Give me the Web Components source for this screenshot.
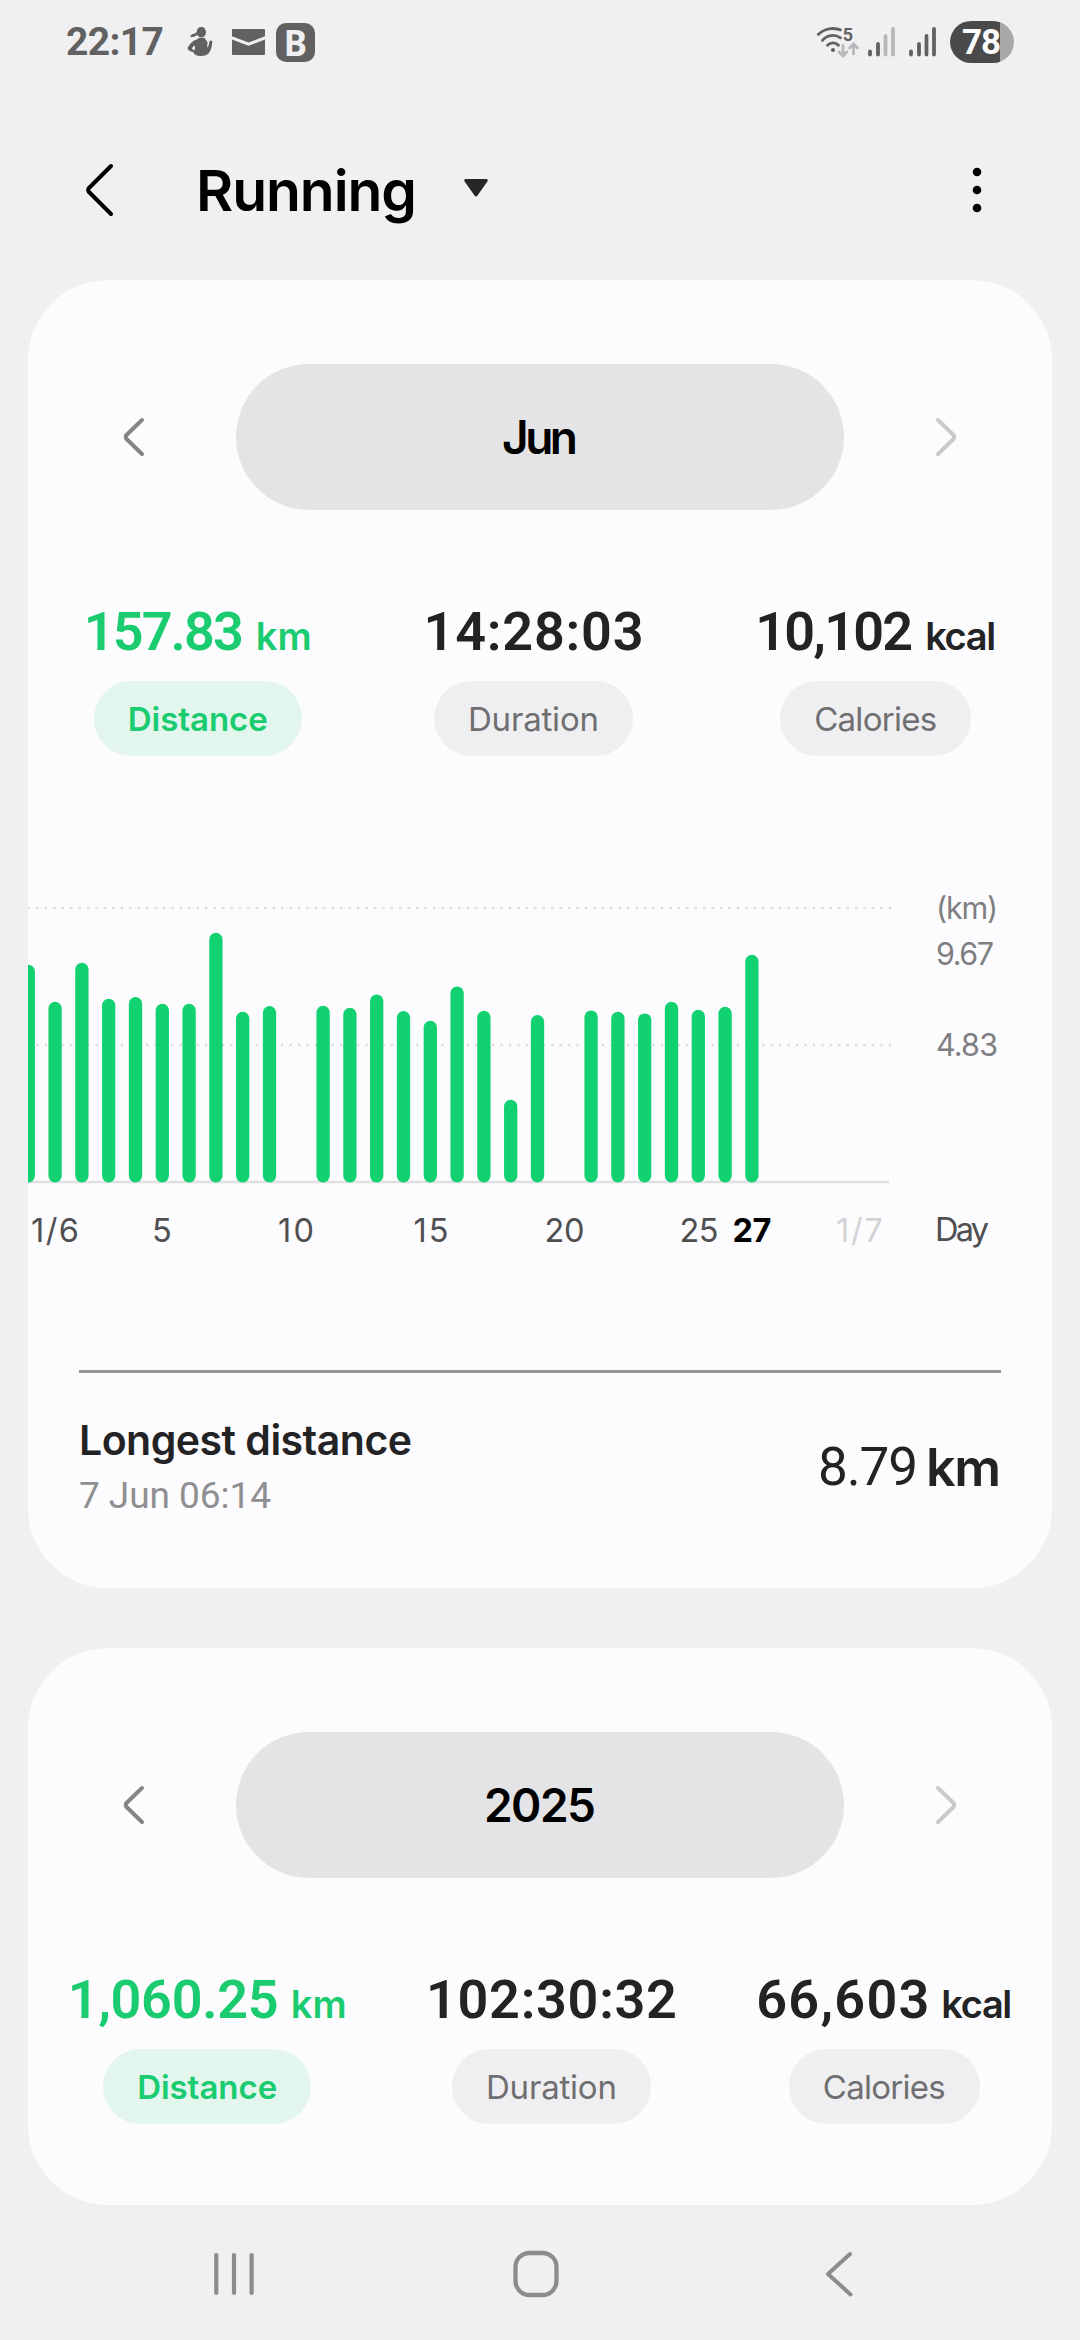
<!DOCTYPE html>
<html lang="en">
<head>
<meta charset="UTF-8">
<meta name="viewport" content="width=device-width, initial-scale=1.0">
<title>Running</title>
<style>
    body {
        margin: 0;
        width: 1080px;
        height: 2340px;
        overflow: hidden;
        background: #f0f0f2;
        color: #232325;
        font-family: Roboto, "Noto Sans", sans-serif;
        --words: Inter, Roboto, sans-serif;
        --green: #1acb70;
        --bar: #11d170;
        --card: #fcfcfe;
    }
</style>
</head>
<body>
    <running-app></running-app>

<script>
// Inline text that is tracked to a given width
class FitText extends HTMLElement {
    constructor() {
        super();
        this.attachShadow({ mode: 'open' });
        this.shadowRoot.innerHTML = `
            <style>
                :host { display: inline-block; white-space: nowrap; }
                span { display: inline-block; }
            </style>
            <span><slot></slot></span>
        `;
    }

    connectedCallback() {
        const target = parseFloat(this.getAttribute('w'));
        const span = this.shadowRoot.querySelector('span');
        const count = this.textContent.length;
        if (!target || count < 2) return;
        const gap = (target - span.getBoundingClientRect().width) / (count - 1);
        span.style.letterSpacing = `${gap}px`;
        span.style.marginRight = `${-gap}px`;
    }
}

class StatusBar extends HTMLElement {
    constructor() {
        super();
        this.attachShadow({ mode: 'open' });
        this.shadowRoot.innerHTML = `
            <style>
                :host {
                    box-sizing: border-box;
                    display: flex;
                    align-items: center;
                    height: 84px;
                    padding: 0 66px;
                    color: #616161;
                }
                svg { display: block; flex: none; }
                .time { font-size: 39px; font-weight: 700; margin-right: 23px; }
                .woman { margin-right: 18px; }
                .mail { margin-right: 11px; }
                .app {
                    width: 39px;
                    height: 39px;
                    border-radius: 10px;
                    background: #616161;
                    color: #f0f0f2;
                    font: 700 35px/39px "Noto Sans", sans-serif;
                    text-align: center;
                }
                .spacer { flex: 1; }
                .wifi { margin-right: 9px; }
                .signal { margin-right: 14px; }
                .battery {
                    box-sizing: border-box;
                    width: 64px;
                    height: 42px;
                    border-radius: 21px;
                    background: linear-gradient(90deg, #4a4a4a 50px, #a8a8aa 50px);
                    color: #fcfcfc;
                    font-size: 35px;
                    font-weight: 700;
                    line-height: 43px;
                    padding-left: 12px;
                }
            </style>
            <fit-text class="time" w="98">22:17</fit-text>
            <svg class="woman" width="27" height="30" viewBox="0 0 27 30" fill="#616161">
                <ellipse cx="14.3" cy="5.2" rx="4.7" ry="5.4"/>
                <path d="M11 4.500c-2 1-3 2.300-5 2.500-1.500.3-2.500 1.300-2.700 3 3 .4 5.500-.5 7.700-3z"/>
                <path fill-rule="evenodd" d="M11.500 11h6.500c.2 2 2 2.500 2.500 4.500.3 1.700-.6 3-.3 5 2-1.500 1.600-4 2.300-6.200.6-1.300 2.800-1 2.800.5-.3 4-.8 7.500-3 10.500-1.300 2.500-4 3.700-8.300 3.700-4 0-7-1.300-7.700-4C3 24.500.5 22.500.5 21.200c2.500-4.700 4.500-6.700 8-8.200 1.500-.5 2.500-1 3-2zM7.300 18.500c-1.300 1-2.300 2.300-2.300 3.200.7.8 1.500 1.200 2.500 1.500.7-1.700.8-3.200-.2-4.700z"/>
            </svg>
            <svg class="mail" width="33" height="28" viewBox="0 0 33 28" fill="#616161">
                <path d="M1 1h31a1 1 0 0 1 1 1v6.300L16.500 14.500 0 8.300V2a1 1 0 0 1 1-1z"/>
                <path d="M0 11.500l16.500 6.300L33 11.500V26a1 1 0 0 1-1 1H1a1 1 0 0 1-1-1z"/>
            </svg>
            <div class="app">B</div>
            <div class="spacer"></div>
            <svg class="wifi" width="43" height="32" viewBox="0 0 43 32" fill="none" stroke="#616161" stroke-width="2.800" stroke-linecap="round">
                <path d="M1.500 9.300C8 2 18 1 25.500 4.300" stroke-linecap="butt"/>
                <path d="M6.500 14.300C11 8.800 19 8 24.500 11.800"/>
                <path d="M11.500 19.300c3-3.300 8-3.300 11 0"/>
                <circle cx="17" cy="24" r="2.100" fill="#616161" stroke="none"/>
                <path d="M27 19.500v10M23.200 26l3.800 4 3.800-4M37.500 28V19M33.500 22l4-4 4 4" stroke="#b8b8ba"/>
                <text x="26.800" y="14.500" font-size="18" font-weight="700" fill="#616161" stroke="none">5</text>
            </svg>
            <svg class="signal" width="27" height="30" viewBox="0 0 27 30" stroke="#616161" stroke-width="3.800" stroke-linecap="round">
                <path d="M2 24.500v3M10 17v10.500"/>
                <path d="M17.500 9v18.500M25 2v25.500" stroke="#b8b8ba"/>
            </svg>
            <svg class="signal" width="27" height="30" viewBox="0 0 27 30" stroke="#616161" stroke-width="3.800" stroke-linecap="round">
                <path d="M2 24.500v3M10 17v10.500M17.500 9v18.500M25 2v25.500"/>
            </svg>
            <div class="battery"><fit-text w="39">78</fit-text></div>
        `;
    }
}

class TitleBar extends HTMLElement {
    connectedCallback() {
        this.attachShadow({ mode: 'open' });
        this.shadowRoot.innerHTML = `
            <style>
                :host {
                    box-sizing: border-box;
                    display: flex;
                    align-items: center;
                    height: 196px;
                    padding: 16px 97px 0 84px;
                }
                svg { display: block; flex: none; }
                .title {
                    color: #000;
                    font-family: var(--words);
                    font-size: 57px;
                    font-weight: 600;
                    margin: 0 47px 0 80px;
                }
                .caret { margin-top: -4px; }
                .more { margin-left: auto; }
            </style>
            <svg width="32" height="56" viewBox="0 0 32 56" fill="none" stroke="#000" stroke-width="4" stroke-linecap="round" stroke-linejoin="round">
                <path d="M27 4L4.500 26.500Q3.500 28 4.500 29.500L27 52"/>
            </svg>
            <fit-text class="title" w="221">${this.textContent}</fit-text>
            <svg class="caret" width="24" height="18" viewBox="0 0 24 18" fill="#252527">
                <path d="M1.500 0h21q1.800.3 1 2.200L13.500 16.500q-1.500 2-3 0L.5 2.200Q-.3.300 1.500 0z"/>
            </svg>
            <svg class="more" width="12" height="46" viewBox="0 0 12 46">
                <circle cx="6" cy="5" r="4.300"/>
                <circle cx="6" cy="23" r="4.300"/>
                <circle cx="6" cy="41" r="4.300"/>
            </svg>
        `;
    }
}

class SummaryCard extends HTMLElement {
    constructor() {
        super();
        this.attachShadow({ mode: 'open' });
        this.shadowRoot.innerHTML = `
            <style>
                :host {
                    display: block;
                    margin: 0 28px 60px;
                    padding-top: 84px;
                    border-radius: 80px;
                    background: var(--card);
                    overflow: hidden;
                }
                :host(.year) { margin-bottom: 0; padding-bottom: 81px; }
                .stats {
                    display: flex;
                    justify-content: space-around;
                    margin-top: 85px;
                }
            </style>
            <slot name="period"></slot>
            <div class="stats"><slot name="stat"></slot></div>
            <slot></slot>
        `;
    }
}

class PeriodPicker extends HTMLElement {
    connectedCallback() {
        this.attachShadow({ mode: 'open' });
        this.shadowRoot.innerHTML = `
            <style>
                :host {
                    box-sizing: border-box;
                    display: flex;
                    align-items: center;
                    justify-content: space-between;
                    height: 146px;
                    padding: 0 94px;
                }
                svg { display: block; }
                .label {
                    width: 608px;
                    height: 146px;
                    border-radius: 73px;
                    background: #e4e4e6;
                    color: #000;
                    font-family: var(--words);
                    font-size: 46px;
                    font-weight: 600;
                    line-height: 147px;
                    text-align: center;
                }
            </style>
            <svg width="24" height="40" viewBox="0 0 24 40" fill="none" stroke="#858587" stroke-width="4" stroke-linecap="round" stroke-linejoin="round">
                <path d="M20 3L4.500 18Q3 20 4.500 22L20 37"/>
            </svg>
            <div class="label"><fit-text w="${this.getAttribute('w')}">${this.textContent}</fit-text></div>
            <svg width="24" height="40" viewBox="0 0 24 40" fill="none" stroke="#cacacc" stroke-width="4" stroke-linecap="round" stroke-linejoin="round">
                <path d="M4 3L19.500 18Q21 20 19.500 22L4 37"/>
            </svg>
        `;
    }
}

class StatItem extends HTMLElement {
    connectedCallback() {
        const unit = this.getAttribute('unit');
        const active = this.hasAttribute('active');
        this.attachShadow({ mode: 'open' });
        this.shadowRoot.innerHTML = `
            <style>
                :host {
                    display: flex;
                    flex-direction: column;
                    align-items: center;
                    gap: 14px;
                    color: ${active ? 'var(--green)' : '#232325'};
                }
                .value {
                    display: flex;
                    align-items: baseline;
                    gap: 12px;
                    height: 72px;
                    font-size: 54px;
                    font-weight: 600;
                    line-height: 73px;
                }
                .unit { font-family: var(--words); font-size: 38px; line-height: 1; }
                .chip {
                    height: 75px;
                    padding: 0 34px;
                    border-radius: 38px;
                    background: ${active ? '#e2f6ee' : '#efeff1'};
                    color: ${active ? 'var(--green)' : '#6f6f71'};
                    font-family: var(--words);
                    font-size: 33px;
                    font-weight: ${active ? 600 : 400};
                    line-height: 76px;
                }
            </style>
            <div class="value">
                <fit-text w="${this.getAttribute('w')}">${this.getAttribute('value')}</fit-text>
                ${unit ? `<fit-text class="unit" w="${unit === 'km' ? 56 : 71}">${unit}</fit-text>` : ''}
            </div>
            <div class="chip"><fit-text w="${this.getAttribute('chip')}">${this.textContent}</fit-text></div>
        `;
    }
}

// heights in px above the baseline, first entry is 31 May
const bars = [
    217.6, 180.6, 219.6, 183.6, 185.3, 178.6, 178.6, 249.6, 170.6, 176.3,
    0, 176.6, 174.6, 188, 171.3, 161.6, 196, 171.6, 82.6, 167.3,
    0, 172, 170.6, 169, 180.6, 172.6, 175.6, 227.6
];

const days = [
    { text: '1/6', x: 27, w: 48 },
    { text: '5', x: 134 },
    { text: '10', x: 268, w: 36 },
    { text: '15', x: 403, w: 35 },
    { text: '20', x: 536.5, w: 40 },
    { text: '25', x: 671, w: 39 },
    { text: '27', x: 724, w: 39, cls: 'today' },
    { text: '1/7', x: 831.5, w: 47, cls: 'next' }
];

class DayChart extends HTMLElement {
    constructor() {
        super();
        this.attachShadow({ mode: 'open' });
    }

    connectedCallback() {
        const rects = bars.map((h, i) => h
            ? `<rect x="${(0.3 + i * 26.8 - 6.65).toFixed(2)}" y="${(302.4 - h).toFixed(1)}" width="13.300" height="${h}" rx="6.650"/>`
            : '').join('');
        const labels = days.map(d =>
            `<text class="${d.cls || 'day'}" x="${d.x}" y="361.700" text-anchor="middle"${d.w ? ` textLength="${d.w}"` : ''}>${d.text}</text>`
        ).join('');

        this.shadowRoot.innerHTML = `
            <style>
                :host { display: block; margin-top: 124px; height: 380px; }
                svg { display: block; }
                .grid { stroke: #dcdcde; stroke-width: 2.600; stroke-linecap: round; stroke-dasharray: 0 8.440; }
                .base { stroke: #e0e0e2; stroke-width: 2.500; }
                text { font-family: var(--words); font-size: 32.500px; fill: #4f4f51; }
                .scale { font-size: 30.500px; fill: #7f7f82; }
                .today { fill: #000; font-weight: 700; }
                .next { fill: #d3d3d5; }
            </style>
            <svg width="1024" height="380" viewBox="0 0 1024 380">
                <path class="grid" d="M1 27.700H862M1 165H862"/>
                <path class="base" d="M0 302H861"/>
                <g fill="var(--bar)">${rects}</g>
                ${labels}
                <text class="scale" x="908" y="39" textLength="62">(km)</text>
                <text class="scale" x="908" y="85" textLength="58">9.67</text>
                <text class="scale" x="908" y="176" textLength="62">4.83</text>
                <text x="907" y="361" textLength="54">Day</text>
            </svg>
        `;
    }
}

class RecordRow extends HTMLElement {
    constructor() {
        super();
        this.attachShadow({ mode: 'open' });
        this.shadowRoot.innerHTML = `
            <style>
                :host {
                    box-sizing: border-box;
                    display: flex;
                    justify-content: space-between;
                    align-items: flex-start;
                    height: 218px;
                    margin: 110px 51px 0;
                    padding-top: 42px;
                    border-top: 3px solid #97979a;
                }
                .info { display: flex; flex-direction: column; gap: 8px; }
                .name { font-family: var(--words); font-size: 41px; font-weight: 600; line-height: 50px; }
                .date { font-size: 37px; line-height: 46px; color: #8f8f91; }
                .value { display: flex; gap: 8px; font-size: 53px; line-height: 105px; }
                .unit { font-family: var(--words); font-size: 52px; font-weight: 600; }
            </style>
            <div class="info">
                <fit-text class="name" w="333">Longest distance</fit-text>
                <fit-text class="date" w="192">7 Jun 06:14</fit-text>
            </div>
            <div class="value">
                <fit-text w="100">8.79</fit-text>
                <fit-text class="unit" w="75">km</fit-text>
            </div>
        `;
    }
}

class NavBar extends HTMLElement {
    constructor() {
        super();
        this.attachShadow({ mode: 'open' });
        this.shadowRoot.innerHTML = `
            <style>
                :host {
                    box-sizing: border-box;
                    display: flex;
                    align-items: center;
                    justify-content: space-between;
                    height: 135px;
                    padding: 3px 226px 0 212px;
                }
                svg { display: block; }
                .home { margin-right: 8px; }
            </style>
            <svg width="44" height="46" viewBox="0 0 44 46" stroke="#8c8c8e" stroke-width="4.200" stroke-linecap="round">
                <path d="M4.300 4v38M22 4v38M39.600 4v38"/>
            </svg>
            <svg class="home" width="50" height="50" viewBox="0 0 50 50" fill="none" stroke="#8c8c8e" stroke-width="4.300">
                <rect x="4.500" y="4" width="41" height="42" rx="14"/>
            </svg>
            <svg width="30" height="48" viewBox="0 0 30 48" fill="none" stroke="#8c8c8e" stroke-width="4" stroke-linecap="round" stroke-linejoin="round">
                <path d="M26 4L4 24l22.500 20.500"/>
            </svg>
        `;
    }
}

class RunningApp extends HTMLElement {
    constructor() {
        super();
        this.attachShadow({ mode: 'open' });
        this.shadowRoot.innerHTML = `
            <style>
                :host { display: block; }
            </style>
            <status-bar></status-bar>
            <title-bar>Running</title-bar>

            <summary-card>
                <period-picker slot="period" w="76">Jun</period-picker>
                <stat-item slot="stat" active value="157.83" unit="km" w="160" chip="140">Distance</stat-item>
                <stat-item slot="stat" value="14:28:03" w="220" chip="131">Duration</stat-item>
                <stat-item slot="stat" value="10,102" unit="kcal" w="158" chip="123">Calories</stat-item>
                <day-chart></day-chart>
                <record-row></record-row>
            </summary-card>

            <summary-card class="year">
                <period-picker slot="period" w="112">2025</period-picker>
                <stat-item slot="stat" active value="1,060.25" unit="km" w="211" chip="140">Distance</stat-item>
                <stat-item slot="stat" value="102:30:32" w="251" chip="131">Duration</stat-item>
                <stat-item slot="stat" value="66,603" unit="kcal" w="173" chip="123">Calories</stat-item>
            </summary-card>

            <nav-bar></nav-bar>
        `;
    }
}

customElements.define('running-app', RunningApp);
customElements.define('status-bar', StatusBar);
customElements.define('title-bar', TitleBar);
customElements.define('summary-card', SummaryCard);
customElements.define('period-picker', PeriodPicker);
customElements.define('stat-item', StatItem);
customElements.define('day-chart', DayChart);
customElements.define('record-row', RecordRow);
customElements.define('nav-bar', NavBar);
// last, so every text is already in place and styled when it is measured
customElements.define('fit-text', FitText);
</script>
</body>
</html>
